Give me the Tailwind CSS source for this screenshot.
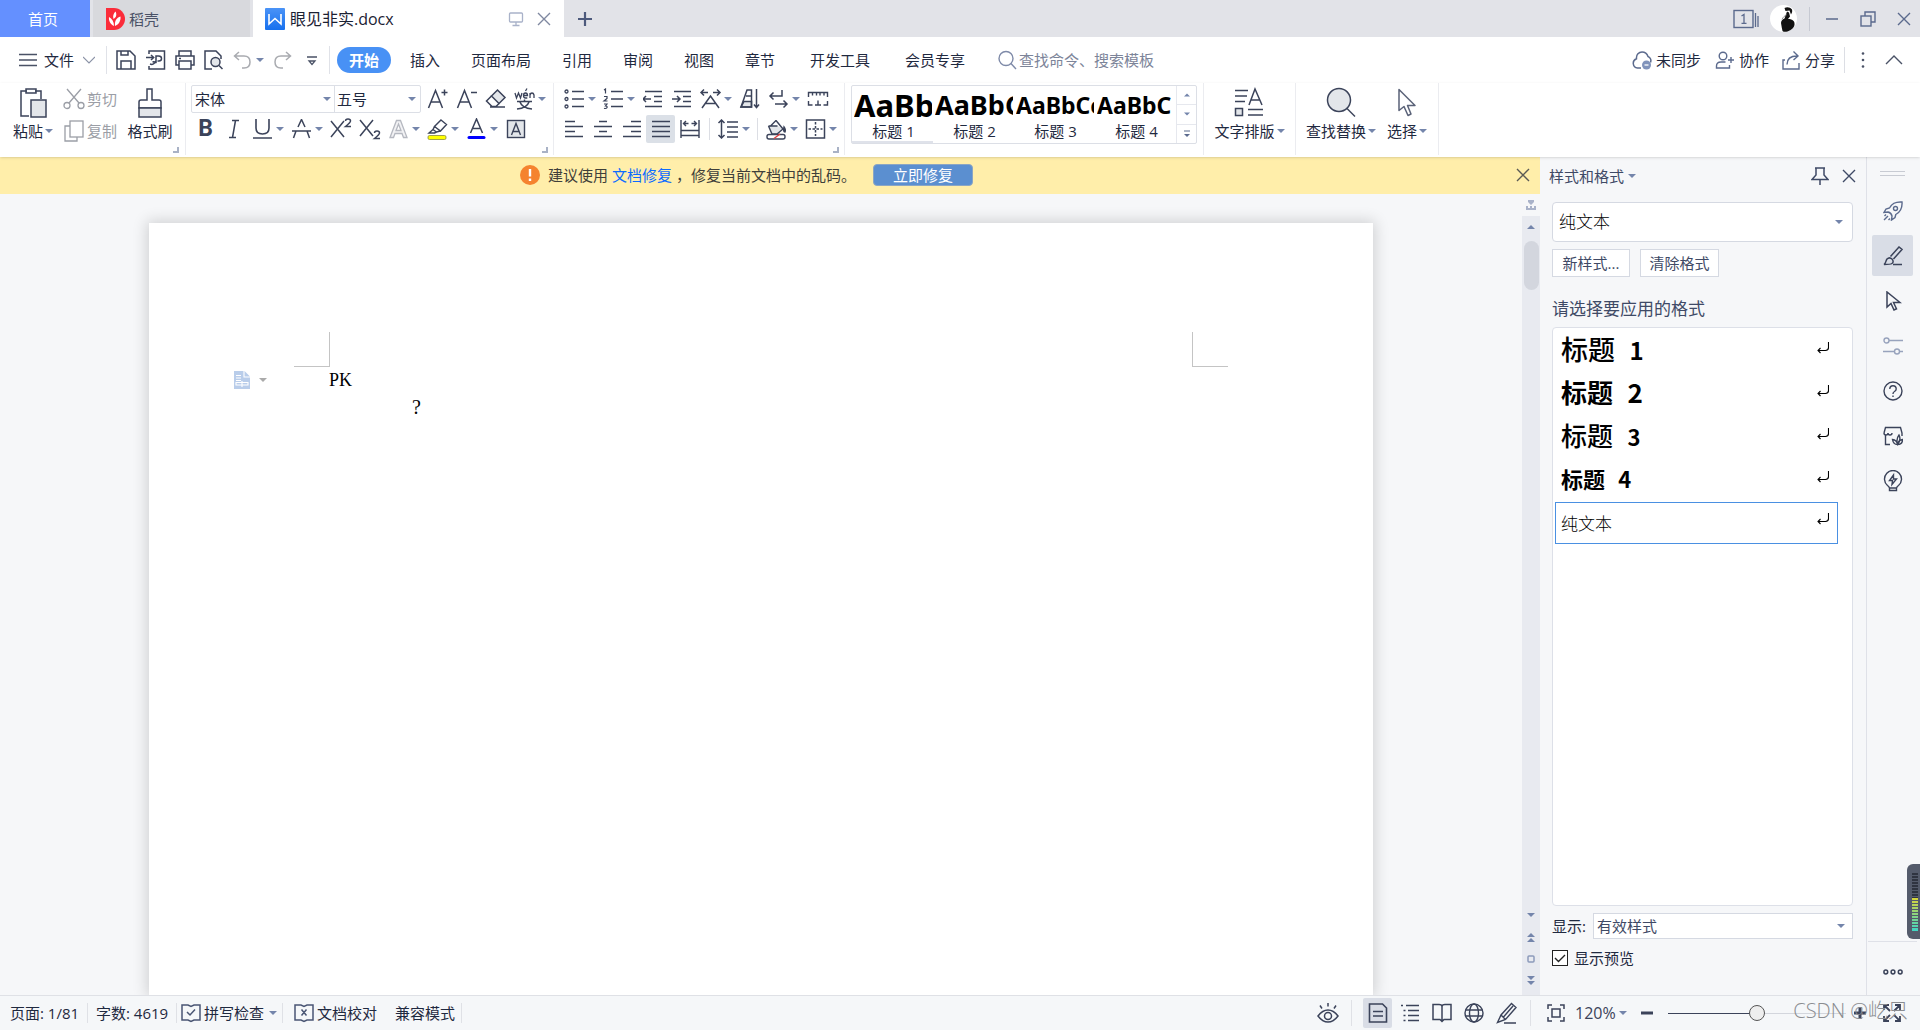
<!DOCTYPE html>
<html lang="zh-CN">
<head>
<meta charset="utf-8">
<title>眼见非实.docx</title>
<script src="https://cdn.jsdelivr.net/npm/@tailwindcss/browser@4"></script>
</head>
<body class="flex h-screen flex-col overflow-hidden bg-[#f6f7f9] font-['Open_Sans','Noto_Sans_CJK_SC',sans-serif] text-[15px] leading-5 text-[#1f2940] whitespace-nowrap">
<svg class="hidden">
  <defs>
    <symbol id="caret" viewBox="0 0 8 8"><path d="M0 2h8L4 6z" fill="#7485ab"/></symbol>
    <symbol id="close" viewBox="0 0 16 16"><path d="M2 2l12 12M14 2L2 14" fill="none" stroke="currentColor" stroke-width="1.4"/></symbol>
    <symbol id="corner" viewBox="0 0 6 6"><path d="M5 0v5H0" fill="none" stroke="#a9b2c6" stroke-width="2"/></symbol>
    <symbol id="cursor" viewBox="0 0 20 30"><path d="M2 2v21l5-4 4 9 3-1.500-3.500-8.500H18z" fill="#fff" stroke="currentColor" stroke-width="1.500" stroke-linejoin="round"/></symbol>
    <symbol id="enter" viewBox="0 0 12 12"><path d="M11.500 0v5.500q0 3-3 3H1M3.500 6L1 8.500 3.500 11" fill="none" stroke="#000" stroke-width="1.100"/></symbol>
  </defs>
</svg>

<!-- Window tabs -->
<header class="flex h-[37px] shrink-0 items-stretch bg-[#e2e3e8]">
  <button class="w-[90px] bg-[#6490ff] pr-1 text-[15px] text-white">首页</button>
  <button class="ml-[3px] flex w-[157px] items-center gap-1 bg-[#d8d9dd] pl-3 text-[15px] text-[#4a5266]">
    <svg class="h-[22px] w-5" viewBox="0 0 20 22"><path d="M1 0h8a11 11 0 0 1 0 22H1z" fill="#fb2c3a"/><path d="M9 18C5 16 3.500 12.500 4 9c3 1.500 5 4.500 5 9zM8.500 11c-1-3 0-5.500 2-7.500 1.500 3 1 6-2 7.500zM10 18c-.5-5 1.500-8.500 5.500-9.500.5 4-1.500 8-5.500 9.500z" fill="#fff"/></svg>
    稻壳
  </button>
  <div class="ml-[3px] flex w-[311px] items-center bg-white pl-3">
    <svg class="h-[22px] w-5" viewBox="0 0 20 22"><defs><linearGradient id="logo" x1="0" y1="0" x2="0" y2="1"><stop offset="0" stop-color="#4a93f7"/><stop offset="1" stop-color="#1670ee"/></linearGradient></defs><rect width="20" height="22" rx="1" fill="url(#logo)"/><path d="M4 6v10l6-5.500 6 5.500V6" fill="none" stroke="#fff" stroke-width="1.600"/></svg>
    <span class="ml-[5px] flex-1 text-[16px] text-[#1b2133]">眼见非实.docx</span>
    <svg class="mr-3 h-4 w-4 text-[#a9b2c9]" viewBox="0 0 16 16" fill="none" stroke="currentColor" stroke-width="1.300"><rect x="1.500" y="2" width="13" height="9" rx="1"/><path d="M8 11v4M4.500 14.500h7"/></svg>
    <button class="mr-3 text-[#7f88a0]" aria-label="关闭标签"><svg class="h-4 w-4"><use href="#close"/></svg></button>
  </div>
  <button class="w-[42px] text-[#4d5a7c]" aria-label="新建"><svg class="mx-auto h-4 w-4" viewBox="0 0 16 16"><path d="M8 1v14M1 8h14" stroke="currentColor" stroke-width="2.200"/></svg></button>
  <div class="flex-1"></div>
  <div class="flex items-center text-[#5b6a8d]">
    <svg class="h-5 w-[26px]" viewBox="0 0 26 20" fill="none" stroke="currentColor" stroke-width="1.400"><rect x="1" y="1.500" width="19" height="17"/><path d="M22.500 4v14M25 7v11M8.500 7l2.500-1.500V14M8.500 14.300h5" stroke-width="1.300"/></svg>
    <svg class="ml-[11px] h-[27px] w-[27px]" viewBox="0 0 27 27"><circle cx="13.500" cy="13.500" r="13.500" fill="#fff"/><path d="M14.500 3c2.500-1.500 5.500-1 7.500 1.500.5 2 0 3.500-1 5l-1.500-4-4 .5zM17 6.500l2 1 1 4-2 2.500c5 0 7 2.500 6.500 6-.5 3-3 5-7 6.500-2 .5-4 .5-5-.5-.5-2-1-5-1.500-8 0-2 1.500-4 3.500-4.500z" fill="#111"/><path d="M12 14.500c1-2.500 3-4 5-5" fill="none" stroke="#777" stroke-width=".8"/></svg>
    <span class="ml-3 h-6 w-px bg-[#c6c9d2]"></span>
    <button class="ml-3 w-5" aria-label="最小化"><svg class="mx-auto h-4 w-4" viewBox="0 0 16 16"><path d="M2 8h12" stroke="currentColor" stroke-width="1.500"/></svg></button>
    <button class="ml-4 w-5" aria-label="还原"><svg class="mx-auto h-4 w-4" viewBox="0 0 16 16" fill="none" stroke="currentColor" stroke-width="1.400"><path d="M5 5V1h10v10h-4"/><rect x="1" y="5" width="10" height="10"/></svg></button>
    <button class="mr-[6px] ml-4 w-5" aria-label="关闭"><svg class="mx-auto h-4 w-4"><use href="#close"/></svg></button>
  </div>
</header>

<!-- Menu row -->
<nav class="flex h-[46px] shrink-0 items-center bg-white">
  <button class="flex w-[106px] items-center pl-[18px]">
    <svg class="h-5 w-5" viewBox="0 0 20 20"><path d="M1 4.500h18M1 10h18M1 15.500h18" stroke="#4a5266" stroke-width="1.300"/></svg>
    <span class="ml-[6px]">文件</span>
    <svg class="ml-[9px] h-3 w-3" viewBox="0 0 12 12"><path d="M0 3l6 6 6-6" fill="none" stroke="#8b93a7" stroke-width="1.200"/></svg>
  </button>
  <div class="flex h-7 w-56 items-center border-x border-[#e0e2e8] pl-[9px] text-[#3b435a]">
    <button aria-label="保存"><svg class="h-5 w-5" viewBox="0 0 20 20" fill="none" stroke="currentColor" stroke-width="1.500"><path d="M1 1h13l5 5v13H1zM5 1v4h7V1M5 19v-8h10v8"/></svg></button>
    <button class="ml-[10px]" aria-label="输出为PDF"><svg class="h-5 w-5" viewBox="0 0 20 20" fill="none" stroke="currentColor" stroke-width="1.500"><path d="M3 4V1h15.500v18H3v-3M0 7.500h7.500M5 5l2.700 2.500L5 10M10 12.500V6h2.500q3 0 3 2.500T13 11h-1.500M4 14q2.500 1 4-.5t2-2.500M6.500 12q2-.5 4 1"/></svg></button>
    <button class="ml-[9px]" aria-label="打印"><svg class="h-5 w-5" viewBox="0 0 20 20" fill="none" stroke="currentColor" stroke-width="1.500"><path d="M4 6V1h12v5M4 15H1V6h18v9h-3"/><rect x="4" y="11" width="12" height="8"/><path d="M4 8.500h2"/></svg></button>
    <button class="ml-[9px]" aria-label="打印预览"><svg class="h-5 w-5" viewBox="0 0 20 20" fill="none" stroke="currentColor" stroke-width="1.500"><path d="M8 19H1V1h11l5 5v3"/><circle cx="11.500" cy="12" r="4.500" fill="#e3e6ea"/><path d="M15 15.500l3.500 3.500"/></svg></button>
    <button class="ml-[9px] flex items-center" aria-label="撤销"><svg class="h-5 w-5 text-[#a9abb0]" viewBox="0 0 20 20" fill="none" stroke="currentColor" stroke-width="1.500"><path d="M6 2L1.500 6 6 10M2 6h9q6 0 6 6t-6 6H9"/></svg><svg class="ml-[3px] h-2 w-2"><use href="#caret"/></svg></button>
    <button class="ml-[8px]" aria-label="恢复"><svg class="h-5 w-5 text-[#a9abb0]" viewBox="0 0 20 20" fill="none" stroke="currentColor" stroke-width="1.500"><path d="M14 2l4.500 4-4.500 4M18 6H9q-6 0-6 6t6 6h2"/></svg></button>
    <button class="ml-[13px]" aria-label="自定义快速访问"><svg class="h-5 w-[14px]" viewBox="0 0 14 20"><path d="M2 7h10M4 11h6l-3 3.500z" fill="none" stroke="#4a5266" stroke-width="1.300"/></svg></button>
  </div>
  <a href="#" class="ml-[7px] flex h-[26px] w-[54px] items-center justify-center rounded-full bg-[#4891f5] font-semibold text-white">开始</a>
  <div class="ml-[19px] flex">
    <a href="#" class="w-[61px]">插入</a><a href="#" class="w-[91px]">页面布局</a><a href="#" class="w-[61px]">引用</a><a href="#" class="w-[61px]">审阅</a><a href="#" class="w-[61px]">视图</a><a href="#" class="w-[65px]">章节</a><a href="#" class="w-[95px]">开发工具</a><a href="#" class="w-[93px]">会员专享</a>
  </div>
  <label class="flex items-center gap-px text-[#7c8499]">
    <svg class="h-5 w-5" viewBox="0 0 20 20" fill="none" stroke="#7e8aa8" stroke-width="1.400"><circle cx="8" cy="8.500" r="7"/><path d="M13 13.500l5 5.500"/></svg>
    <input class="w-40 bg-transparent outline-none placeholder:text-[#7c8499]" placeholder="查找命令、搜索模板" aria-label="查找">
  </label>
  <div class="flex-1"></div>
  <div class="flex items-center text-[#1f2940]">
    <button class="flex items-center gap-1"><svg class="h-5 w-5" viewBox="0 0 20 20"><path d="M9 18H5.500a4.800 4.800 0 0 1-1-9.300C4 4.500 7 2 10 2s5 1.500 6 4.500c2.500 1 3.500 3.500 2.500 6" fill="none" stroke="#5b6a8d" stroke-width="1.500"/><circle cx="14.500" cy="15" r="4.500" fill="#8093bb"/><path d="M12.500 15h4" stroke="#fff" stroke-width="1.300"/></svg>未同步</button>
    <button class="ml-[14px] flex items-center gap-1"><svg class="h-5 w-5" viewBox="0 0 20 20" fill="none" stroke="#5b6a8d" stroke-width="1.400"><circle cx="8" cy="6" r="3.800"/><path d="M10.500 12H6q-4.500 0-4.500 4v2h13v-3M13 10h6M16 7v6"/></svg>协作</button>
    <button class="ml-[12px] flex items-center gap-1"><svg class="h-5 w-5" viewBox="0 0 20 20" fill="none" stroke="#5b6a8d" stroke-width="1.400"><path d="M4 10H2v9h16v-6M6 14.500C6 9 9 6 16 6M12.500 1.500L17 6l-4.500 4"/></svg>分享</button>
    <span class="ml-[9px] h-[26px] w-px bg-[#dcdee4]"></span>
    <button class="ml-2 w-5" aria-label="更多"><svg class="mx-auto h-5 w-5" viewBox="0 0 20 20" fill="#4a5266"><circle cx="10" cy="3.500" r="1.300"/><circle cx="10" cy="10" r="1.300"/><circle cx="10" cy="16.500" r="1.300"/></svg></button>
    <button class="mr-[17px] ml-3" aria-label="收起功能区"><svg class="h-[18px] w-[18px]" viewBox="0 0 18 18"><path d="M1 13l8-8 8 8" fill="none" stroke="#4a5266" stroke-width="1.400"/></svg></button>
  </div>
</nav>

<!-- Ribbon -->
<section class="z-10 flex h-[74px] shrink-0 bg-white pb-[2px] text-[#3b435a] shadow-sm">
  <div class="flex w-[186px] shrink-0 border-r border-[#ebecf0] text-[#1f2940]">
    <button class="flex w-[58px] flex-col items-center pt-1 pl-2">
      <svg class="h-[31px] w-[30px]" viewBox="0 0 30 31" fill="none" stroke="#3b435a" stroke-width="1.500"><path d="M11 29H3V4h6M17 4h6v8"/><path d="M8 2h10v4H8z"/><rect x="13" y="13" width="15" height="17" fill="#e3e6ea"/></svg>
      <span class="mt-[3px] flex items-center">粘贴<svg class="ml-[2px] h-2 w-2"><use href="#caret"/></svg></span>
    </button>
    <div class="flex w-[66px] flex-col pl-[5px] text-[#9b9ea6]">
      <button class="flex h-8 items-center gap-[2px]"><svg class="h-[22px] w-[22px]" viewBox="0 0 22 22" fill="none" stroke="currentColor" stroke-width="1.300"><path d="M4 1l12 14M18 1L6 15"/><circle cx="4" cy="17.500" r="3"/><circle cx="18" cy="17.500" r="3"/></svg>剪切</button>
      <button class="flex h-8 items-center gap-[2px]"><svg class="h-[22px] w-[22px]" viewBox="0 0 22 22" fill="none" stroke="currentColor" stroke-width="1.300"><path d="M7 6H2v15h12v-4"/><rect x="7" y="1" width="13" height="16"/></svg>复制</button>
    </div>
    <button class="flex w-[52px] flex-col items-center pt-1">
      <svg class="h-[31px] w-[26px]" viewBox="0 0 26 31" fill="none" stroke="#3b435a" stroke-width="1.500"><path d="M10 13V2h5v11h7q2 0 2 2v6H2v-6q0-2 2-2z"/><path d="M2 21h22v9H2z" fill="#e3e6ea"/></svg>
      <span class="mt-[3px]">格式刷</span>
    </button>
    <svg class="mb-[2px] -ml-[3px] h-[6px] w-[6px] self-end"><use href="#corner"/></svg>
  </div>

  <div class="w-[368px] shrink-0 border-r border-[#ebecf0] pl-[5px]">
    <div class="flex h-8 items-center">
      <div class="mr-[2px] flex h-7 w-[230px] rounded-xs border border-[#dcdfe6] text-[#1f2940]">
        <label class="flex w-[143px] items-center border-r border-[#dcdfe6] pr-[3px]"><select aria-label="字体" class="flex-1 appearance-none bg-transparent pl-[3px] text-[15px]"><option>宋体</option></select><svg class="h-2 w-2"><use href="#caret"/></svg></label>
        <label class="flex flex-1 items-center pr-1"><select aria-label="字号" class="w-10 flex-1 appearance-none bg-transparent pl-[2px] text-[15px]"><option>五号</option></select><svg class="h-2 w-2"><use href="#caret"/></svg></label>
      </div>
      <button class="w-[29px]" aria-label="增大字号"><svg class="mx-auto h-[22px] w-[22px]" viewBox="0 0 22 22" fill="none" stroke="currentColor" stroke-width="1.500"><path d="M1.500 20L8.500 2.500l7 17.500M4 14h9M14.500 4.500h6M17.500 1.500v6"/></svg></button>
      <button class="w-[29px]" aria-label="减小字号"><svg class="mx-auto h-[22px] w-[22px]" viewBox="0 0 22 22" fill="none" stroke="currentColor" stroke-width="1.500"><path d="M1.500 20L8.500 2.500l7 17.500M4 14h9M15 4.500h6"/></svg></button>
      <button class="w-[29px]" aria-label="清除格式"><svg class="mx-auto h-[22px] w-[22px]" viewBox="0 0 22 22" fill="none" stroke="currentColor" stroke-width="1.500"><path d="M12.500 2l7.500 7.500-6 6L6.500 8z" fill="#e3e6ea"/><path d="M6.500 8L1.500 13l5.500 5.500h4l3-3M5 19h15"/></svg></button>
      <button class="flex w-[39px] items-center" aria-label="拼音指南"><svg class="h-[24px] w-[29px]" viewBox="0 0 29 24" fill="none" stroke="currentColor" stroke-width="1.500"><path d="M5 6l1.500 5L8.500 6l2 5L12 6M13.500 8.500h4q0-2.500-2-2.500t-2 2.500T15.500 11h1.800M15.500 4l1.500-2.500M20 11V6M20 8q.5-2 2-2t2 2v3" stroke-width="1.300"/><path d="M7 14.500h15M14.500 12.500v2M10 15q2 6 12 7M19 15q-2 6-12 7"/></svg><svg class="-ml-px h-2 w-2"><use href="#caret"/></svg></button>
    </div>
    <div class="flex h-7 items-center">
      <button class="w-[29px] font-['Roboto'] text-[23px] font-bold" aria-label="加粗">B</button>
      <button class="w-[28px]" aria-label="倾斜"><svg class="mx-auto h-5 w-5" viewBox="0 0 20 20" fill="none" stroke="currentColor" stroke-width="1.500"><path d="M8 1.500h7M5 18.500h7M11.500 1.500l-3 17"/></svg></button>
      <button class="flex w-[39px] items-center" aria-label="下划线"><svg class="h-5 w-[29px]" viewBox="0 0 29 20" fill="none" stroke="currentColor" stroke-width="1.600"><path d="M8 0v9q0 6 6.500 6t6.500-6V0M5 19h19"/></svg><svg class="-ml-px h-2 w-2"><use href="#caret"/></svg></button>
      <button class="flex w-[39px] items-center" aria-label="删除线"><svg class="h-5 w-[29px]" viewBox="0 0 29 20" fill="none" stroke="currentColor" stroke-width="1.500"><path d="M11 8l3.500-7.500L18 8M5 12h19M9 12l-2.500 7M20 12l2.500 7"/></svg><svg class="-ml-px h-2 w-2"><use href="#caret"/></svg></button>
      <button class="w-[29px]" aria-label="上标"><svg class="mx-auto h-[22px] w-[22px]" viewBox="0 0 22 22" fill="none" stroke="currentColor" stroke-width="1.500"><path d="M1 3l13 16M14 3L1 19M15.500 3q0-2 2.500-2t2.500 2q0 1.500-5 5.500H21"/></svg></button>
      <button class="w-[29px]" aria-label="下标"><svg class="mx-auto h-[22px] w-[22px]" viewBox="0 0 22 22" fill="none" stroke="currentColor" stroke-width="1.500"><path d="M1 2l13 16M14 2L1 18M15.500 15q0-2 2.500-2t2.500 2q0 1.500-5 5.500H21"/></svg></button>
      <button class="flex w-[39px] items-center" aria-label="文字效果"><svg class="h-5 w-[29px]" viewBox="0 0 29 20" fill="#f2f2f4" stroke="#b5b8c0" stroke-width="1.300"><path d="M6 18.500L12.500 1.500h4l6.500 17h-3.500l-1.500-4h-7l-1.500 4zM12 11.500h5L14.500 5z"/></svg><svg class="-ml-px h-2 w-2"><use href="#caret"/></svg></button>
      <button class="flex w-[39px] items-center" aria-label="突出显示"><svg class="h-[22px] w-[29px]" viewBox="0 0 29 22" fill="none" stroke="currentColor" stroke-width="1.400"><path d="M18 2l5.500 4.500-6 6.500-6-4.500zM11.500 8.500l-1.500 3 3.500 2.500 4-1M10 11.500l-4 3.500h5.500l2-1"/><rect x="5" y="17.500" width="18" height="4" rx="1.500" fill="#ff0" stroke="#8a8a40" stroke-width=".8"/></svg><svg class="-ml-px h-2 w-2"><use href="#caret"/></svg></button>
      <button class="flex w-[39px] items-center" aria-label="字体颜色"><svg class="h-[22px] w-[29px]" viewBox="0 0 29 22" fill="none" stroke="currentColor" stroke-width="1.500"><path d="M8.500 15L14.500 1l6 14M10.500 10.500h8"/><path d="M7 19.500h15" stroke="#00f" stroke-width="3" stroke-linecap="round"/></svg><svg class="-ml-px h-2 w-2"><use href="#caret"/></svg></button>
      <button class="w-[29px]" aria-label="字符底纹"><svg class="mx-auto h-5 w-5" viewBox="0 0 20 20" fill="none" stroke="currentColor" stroke-width="1.400"><rect x="1.500" y="1.500" width="17" height="17" fill="#e3e6ea"/><path d="M5.500 16L10 4.500 14.500 16M7 12.500h6"/></svg></button>
    </div>
    <svg class="mt-1 mr-[5px] ml-auto h-[6px] w-[6px]"><use href="#corner"/></svg>
  </div>

  <div class="w-[291px] shrink-0 border-r border-[#ebecf0] pl-[6px]">
    <div class="flex h-8 items-center">
      <button class="flex w-[39px] items-center" aria-label="项目符号"><svg class="h-5 w-[29px]" viewBox="0 0 29 20" fill="none" stroke="currentColor" stroke-width="1.500"><path d="M12 2.500h12M12 10h12M12 17.500h12"/><g stroke-width="1.300"><circle cx="6.500" cy="2.500" r="1.500"/><circle cx="6.500" cy="10" r="1.500"/><circle cx="6.500" cy="17.500" r="1.500"/></g></svg><svg class="-ml-px h-2 w-2"><use href="#caret"/></svg></button>
      <button class="flex w-[39px] items-center" aria-label="编号"><svg class="h-[22px] w-[29px]" viewBox="0 0 29 22" fill="none" stroke="currentColor" stroke-width="1.500"><path d="M12 3.500h12M12 11h12M12 18.500h12"/><path d="M5 2l1.500-1v4.500M5 8.500h3v2L5 13h3.500M5 16h3l-1.500 2q2 0 1.500 1.700-1 1.300-3 .5" stroke-width="1.200"/></svg><svg class="-ml-px h-2 w-2"><use href="#caret"/></svg></button>
      <button class="w-[29px]" aria-label="减少缩进"><svg class="mx-auto h-5 w-5" viewBox="0 0 20 20" fill="none" stroke="currentColor" stroke-width="1.500"><path d="M2 2.500h17M11 7.500h8M11 12.500h8M2 17.500h17M0 10h8M3 7l-3 3 3 3"/></svg></button>
      <button class="w-[29px]" aria-label="增加缩进"><svg class="mx-auto h-5 w-5" viewBox="0 0 20 20" fill="none" stroke="currentColor" stroke-width="1.500"><path d="M2 2.500h17M11 7.500h8M11 12.500h8M2 17.500h17M0 10h8M5 7l3 3-3 3"/></svg></button>
      <button class="flex w-[39px] items-center" aria-label="中文版式"><svg class="h-[22px] w-[29px]" viewBox="0 0 29 22" fill="none" stroke="currentColor" stroke-width="1.500"><path d="M6 20l8.500-12L23 20M9.500 15.500h10M5 4.500h7M8 1.500l-3 3 3 3M17 4.500h7M21 1.500l3 3-3 3"/></svg><svg class="-ml-px h-2 w-2"><use href="#caret"/></svg></button>
      <button class="w-[29px]" aria-label="排序"><svg class="mx-auto h-[22px] w-[22px]" viewBox="0 0 22 22" fill="none" stroke="currentColor" stroke-width="1.500"><path d="M5 13.500h7.500V19H2z" fill="#e3e6ea"/><path d="M8 2h4.500v17H2zM7 8h5M17.500 1v18M15 16.500l2.500 3 2.500-3"/></svg></button>
      <button class="flex w-[39px] items-center" aria-label="换行"><svg class="h-[22px] w-[29px]" viewBox="0 0 29 22" fill="none" stroke="currentColor" stroke-width="1.500"><path d="M18 2v6H6M9.500 4.500L6 8l3.500 3.500M11 16h12M19.500 12.500L23 16l-3.500 3.500"/></svg><svg class="-ml-px h-2 w-2"><use href="#caret"/></svg></button>
      <button class="w-[29px]" aria-label="制表位"><svg class="mx-auto h-[22px] w-[22px]" viewBox="0 0 22 22" fill="none" stroke="currentColor" stroke-width="1.400"><path d="M1.500 9V4.500h19V9M5.500 4.500v3M9.500 4.500v3M13 4.500v3M17 4.500v3M1.500 13v4h4M20.500 13v4h-4M11 12.500V17M8 17h6"/></svg></button>
    </div>
    <div class="flex h-7 items-center">
      <button class="w-[28px]" aria-label="左对齐"><svg class="mx-auto h-5 w-5" viewBox="0 0 20 20" stroke="currentColor" stroke-width="1.500"><path d="M1 2.500h10M1 7.500h18M1 12.500h10M1 17.500h18"/></svg></button>
      <button class="w-[29px]" aria-label="居中"><svg class="mx-auto h-5 w-5" viewBox="0 0 20 20" stroke="currentColor" stroke-width="1.500"><path d="M6 2.500h8M1 7.500h18M6 12.500h8M1 17.500h18"/></svg></button>
      <button class="w-[29px]" aria-label="右对齐"><svg class="mx-auto h-5 w-5" viewBox="0 0 20 20" stroke="currentColor" stroke-width="1.500"><path d="M9 2.500h10M1 7.500h18M9 12.500h10M1 17.500h18"/></svg></button>
      <button class="h-7 w-[29px] rounded-xs bg-[#dbe0e7]" aria-label="两端对齐"><svg class="mx-auto h-5 w-5" viewBox="0 0 20 20" stroke="currentColor" stroke-width="1.500"><path d="M1 2.500h18M1 7.500h18M1 12.500h18M1 17.500h18"/></svg></button>
      <button class="w-[29px]" aria-label="分散对齐"><svg class="mx-auto h-5 w-5" viewBox="0 0 20 20" fill="none" stroke="currentColor" stroke-width="1.400"><path d="M1 1v18M19 1v18M3.500 4.500h5M11.500 4.500h5M6 2L3.500 4.500 6 7M14 2l2.500 2.500L14 7M1 11.500h18M1 16.500h18"/></svg></button>
      <span class="ml-[5px] mr-1 h-[22px] w-px bg-[#dcdee4]"></span>
      <button class="flex w-[39px] items-center" aria-label="行距"><svg class="h-5 w-[29px]" viewBox="0 0 29 20" fill="none" stroke="currentColor" stroke-width="1.500"><path d="M13 3h11M13 8h11M13 13h11M13 18h11M7.500 1v18M4.500 4l3-3 3 3M4.500 16l3 3 3-3"/></svg><svg class="-ml-px h-2 w-2"><use href="#caret"/></svg></button>
      <span class="mx-1 h-[22px] w-px bg-[#dcdee4]"></span>
      <button class="flex w-[39px] items-center" aria-label="底纹颜色"><svg class="h-[22px] w-[29px]" viewBox="0 0 29 22" fill="none" stroke="currentColor" stroke-width="1.400"><path d="M7 8h9l5 3-6 5H10z" fill="#e3e6ea" stroke="none"/><path d="M14 2.500L21 11l-6 5h-5L6.500 8M6.500 8h9M14 2.500L8 8.500"/><path d="M22 9q2 3 1 5-2 0-1-5z" fill="currentColor"/><rect x="5" y="16.500" width="18" height="4.500" rx="2" fill="#fff"/><path d="M12 20.500l6-4.500" stroke="#e04040"/></svg><svg class="-ml-px h-2 w-2"><use href="#caret"/></svg></button>
      <button class="flex w-[39px] items-center" aria-label="边框"><svg class="h-5 w-[29px]" viewBox="0 0 29 20" fill="none" stroke="currentColor" stroke-width="1.500"><rect x="5.500" y="1" width="18" height="18"/><path d="M14.500 3v14M7.500 10h14" stroke-dasharray="2.500 1.500"/></svg><svg class="-ml-px h-2 w-2"><use href="#caret"/></svg></button>
    </div>
    <svg class="mt-1 mr-[5px] ml-auto h-[6px] w-[6px]"><use href="#corner"/></svg>
  </div>

  <div class="w-[359px] shrink-0 border-r border-[#ebecf0] pt-[2px] pl-[6px] text-[#1f2940]">
    <div class="flex h-[59px] w-[346px] rounded-xs border border-[#dcdfe6]">
      <button class="flex w-[81px] flex-col items-start border-b-2 border-[#dfe2ea] pl-[2px]"><b class="h-[35px] w-[78px] overflow-hidden text-left font-['Noto_Sans'] text-[31px] leading-[38px] text-black">AaBb</b><span class="w-full text-center">标题 1</span></button>
      <button class="flex w-[81px] flex-col items-start pl-[2px]"><b class="h-[35px] w-[78px] overflow-hidden text-left font-['Noto_Sans'] text-[27px] leading-[38px] text-black">AaBbC</b><span class="w-full text-center">标题 2</span></button>
      <button class="flex w-[81px] flex-col items-start pl-[2px]"><b class="h-[35px] w-[78px] overflow-hidden text-left font-['Noto_Sans'] text-[23px] leading-[38px] text-black">AaBbCc</b><span class="w-full text-center">标题 3</span></button>
      <button class="flex w-[81px] flex-col items-start pl-[2px]"><b class="h-[35px] w-[78px] overflow-hidden text-left font-['Noto_Sans'] text-[23px] leading-[38px] text-black">AaBbC</b><span class="w-full text-center">标题 4</span></button>
      <div class="flex flex-1 flex-col divide-y divide-[#e6e8ee] border-l border-[#e6e8ee]">
        <button class="flex-1" aria-label="上一行"><svg class="mx-auto h-[6px] w-[6px] rotate-180"><use href="#caret"/></svg></button>
        <button class="flex-1" aria-label="下一行"><svg class="mx-auto h-[6px] w-[6px]"><use href="#caret"/></svg></button>
        <button class="flex-1" aria-label="更多样式"><svg class="mx-auto h-2 w-2" viewBox="0 0 8 8"><path d="M1 1h6" stroke="#5b6a8d"/><path d="M1 4h6L4 7z" fill="#5b6a8d"/></svg></button>
      </div>
    </div>
  </div>

  <div class="flex w-[92px] shrink-0 justify-center border-r border-[#ebecf0] text-[#1f2940]">
    <button class="flex flex-col items-center pt-1">
      <svg class="h-[31px] w-[30px]" viewBox="0 0 30 31" fill="none" stroke="#3b435a" stroke-width="1.500"><path d="M1 3.500h13M1 9h12M1 14.500h10M15 18l6-16 7 16M17 13h9M14 22.500h15M14 28h15"/><rect x="1.500" y="21.500" width="7" height="7" fill="#e3e6ea"/></svg>
      <span class="mt-[3px] flex items-center">文字排版<svg class="ml-[2px] h-2 w-2"><use href="#caret"/></svg></span>
    </button>
  </div>
  <div class="flex w-[143px] shrink-0 border-r border-[#ebecf0] pl-[10px] text-[#1f2940]">
    <button class="flex flex-col items-center pt-1">
      <svg class="h-[31px] w-[30px]" viewBox="0 0 30 31" fill="none" stroke="#3b435a" stroke-width="1.500"><circle cx="13" cy="13" r="11.500" fill="#e3e6ea"/><path d="M21 21.500l8 8"/></svg>
      <span class="mt-[3px] flex items-center">查找替换<svg class="ml-[2px] h-2 w-2"><use href="#caret"/></svg></span>
    </button>
    <button class="ml-[11px] flex flex-col items-center pt-1">
      <svg class="h-[31px] w-5 text-[#5a6278]"><use href="#cursor"/></svg>
      <span class="mt-[3px] flex items-center">选择<svg class="ml-[2px] h-2 w-2"><use href="#caret"/></svg></span>
    </button>
  </div>
</section>

<!-- Work area -->
<main class="flex min-h-0 flex-1">
  <div class="flex min-w-0 flex-1 flex-col">
    <div class="flex h-[37px] shrink-0 items-center bg-[#ffeeaa] pb-[2px] text-[#3f3f3a]">
      <div class="flex flex-1 items-center pl-[520px]">
        <svg class="h-5 w-5" viewBox="0 0 20 20"><circle cx="10" cy="10" r="10" fill="#f5832f"/><path d="M10 4v7.500M10 13.500V16" stroke="#fff" stroke-width="2.400"/></svg>
        <span class="ml-2">建议使用</span><a href="#" class="ml-1 text-[#0d6bff]">文档修复</a><span class="ml-1">，修复当前文档中的乱码。</span>
        <button class="ml-[17px] h-[22px] w-[100px] rounded-sm border border-[#8ba6c4] bg-[#5b8fd0] leading-[18px] text-white">立即修复</button>
      </div>
      <button class="mr-[9px] text-[#5a5a55]" aria-label="关闭提示"><svg class="h-4 w-4"><use href="#close"/></svg></button>
    </div>
    <div class="flex min-h-0 flex-1">
      <div class="min-w-0 flex-1 overflow-hidden pt-[29px] pr-[149px] pl-[149px]">
        <article class="h-full bg-white pt-[109px] shadow-[0_0_14px_2px_rgba(0,0,0,0.16)]">
          <div class="mx-[145px] flex justify-between">
            <span class="h-[35px] w-9 border-r border-b border-[#c4c4c4]"></span>
            <span class="h-[35px] w-9 border-b border-l border-[#c4c4c4]"></span>
          </div>
          <div class="flex items-center pl-[85px]">
            <button class="flex w-[95px] items-center" aria-label="粘贴选项"><svg class="h-[18px] w-4" viewBox="0 0 16 18"><path d="M0 0h10.500L16 5.500V18H0z" fill="#b9cdea"/><path d="M10 0v6h6M2 4.500h5M2 7h5M2 9.500h5M2 14v-2.500h12V14zM8 10v6" fill="none" stroke="#fff" stroke-width="1.100"/></svg><svg class="ml-[9px] h-2 w-2" viewBox="0 0 8 8"><path d="M0 2h8L4 6z" fill="#aaa"/></svg></button>
            <p class="h-[26px] font-['Liberation_Serif',serif] text-[18px] leading-[26px] text-black">PK</p>
          </div>
          <p class="pl-[263px] font-['Liberation_Serif',serif] text-[20px] leading-7 text-black">?</p>
        </article>
      </div>
      <div class="flex w-[18px] shrink-0 flex-col items-center bg-[#e8eaf0]">
        <span class="flex h-[22px] w-full items-center justify-center bg-[#f6f7f9]"><svg class="h-3 w-[10px]" viewBox="0 0 10 12" fill="#a9b2c9"><path d="M2 1h6v2L5 6 2 3zM0 7h2v2h2V7h2v2h2V7h2v4H0z"/></svg></span>
        <svg class="mt-[7px] h-2 w-2 rotate-180"><use href="#caret"/></svg>
        <span class="mt-[10px] h-[49px] w-[15px] rounded-full bg-[#d3d6de]"></span>
        <span class="flex-1"></span>
        <svg class="h-2 w-2"><use href="#caret"/></svg>
        <svg class="mt-[13px] h-[10px] w-2" viewBox="0 0 8 10" fill="#7485ab"><path d="M0 5l4-4 4 4zM0 10l4-4 4 4z"/></svg>
        <svg class="mt-[13px] h-2 w-2" viewBox="0 0 8 8"><rect x="1" y="1" width="6" height="6" rx="1" fill="none" stroke="#8c9aba" stroke-width="1.500"/></svg>
        <svg class="mt-[13px] mb-[9px] h-[10px] w-2" viewBox="0 0 8 10" fill="#7485ab"><path d="M0 0l4 4 4-4zM0 5l4 4 4-4z"/></svg>
      </div>
    </div>
  </div>

  <!-- Styles pane -->
  <aside class="flex w-[326px] shrink-0 flex-col pr-[13px] pl-3 text-[#3f4a66]">
    <div class="flex h-[38px] shrink-0 items-center">
      <button class="-ml-[3px] flex items-center">样式和格式<svg class="ml-1 h-2 w-2"><use href="#caret"/></svg></button>
      <span class="flex-1"></span>
      <button aria-label="固定"><svg class="h-[18px] w-[18px]" viewBox="0 0 18 18" fill="none" stroke="currentColor" stroke-width="1.500"><path d="M4 1h10M5 1v7l-4 4.500h16L13 8V1M9 12.500V18"/></svg></button>
      <button class="ml-3 -mr-1" aria-label="关闭窗格"><svg class="h-4 w-4"><use href="#close"/></svg></button>
    </div>
    <label class="mt-[7px] flex h-10 shrink-0 items-center rounded-sm border border-[#d5d9e2] bg-white pr-[9px]"><select aria-label="当前样式" class="flex-1 appearance-none bg-transparent pl-[6px] text-[17px] font-light text-black"><option>纯文本</option></select><svg class="h-2 w-2"><use href="#caret"/></svg></label>
    <div class="mt-[7px] flex shrink-0 gap-[10px]">
      <button class="h-7 w-[78px] border border-[#d5d9e2] bg-white">新样式...</button>
      <button class="h-7 w-[79px] border border-[#d5d9e2] bg-white">清除格式</button>
    </div>
    <h2 class="mt-5 shrink-0 text-[17px] leading-6">请选择要应用的格式</h2>
    <ul class="mt-[6px] min-h-0 flex-1 rounded-sm border border-[#dde0e8] bg-white pt-[2px] pl-[2px] font-['Noto_Sans_CJK_SC',sans-serif] text-black">
      <li class="flex h-[43px] w-[283px] items-center justify-between px-[6px] pr-[9px]"><span class="text-[27px] leading-10 font-medium">标题<span class="font-['Liberation_Mono'] text-[24px]"> </span><b class="text-[24px]">1</b></span><svg class="mb-2 h-3 w-3"><use href="#enter"/></svg></li>
      <li class="flex h-[43px] w-[283px] items-center justify-between px-[6px] pr-[9px]"><span class="text-[26px] leading-10 font-bold">标题<span class="font-['Liberation_Mono'] text-[24px]"> </span>2</span><svg class="mb-2 h-3 w-3"><use href="#enter"/></svg></li>
      <li class="flex h-[43px] w-[283px] items-center justify-between px-[6px] pr-[9px]"><span class="text-[26px] leading-10 font-medium">标题<span class="font-['Liberation_Mono'] text-[24px]"> </span><b class="text-[22px]">3</b></span><svg class="mb-2 h-3 w-3"><use href="#enter"/></svg></li>
      <li class="flex h-[43px] w-[283px] items-center justify-between px-[6px] pr-[9px]"><span class="text-[22px] leading-10 font-bold">标题<span class="font-['Liberation_Mono']"> </span>4</span><svg class="mb-2 h-3 w-3"><use href="#enter"/></svg></li>
      <li class="flex h-[42px] w-[283px] items-center justify-between border border-[#4a90e2] pr-2 pl-[5px]"><span class="text-[17px] font-light">纯文本</span><svg class="mb-2 h-3 w-3"><use href="#enter"/></svg></li>
    </ul>
    <div class="mt-[7px] flex h-[26px] shrink-0 items-center text-[#1f2940]">
      <label for="show">显示:</label>
      <span class="ml-[7px] flex h-[26px] flex-1 items-center border border-[#d5d9e2] bg-white pr-[7px]"><select id="show" class="flex-1 appearance-none bg-transparent pl-[3px] text-[15px] text-[#3f4a66]"><option>有效样式</option></select><svg class="h-2 w-2"><use href="#caret"/></svg></span>
    </div>
    <label class="mt-[11px] mb-[29px] flex h-4 shrink-0 items-center gap-[6px] text-[#1f2940]"><span class="grid"><input type="checkbox" checked class="col-start-1 row-start-1 h-4 w-4 appearance-none border border-[#222] bg-white"><svg class="pointer-events-none col-start-1 row-start-1 h-4 w-4" viewBox="0 0 16 16"><path d="M3 8l3.500 3.500L13 5" fill="none" stroke="#222" stroke-width="1.400"/></svg></span>显示预览</label>
  </aside>

  <!-- Tool strip -->
  <aside class="relative flex w-[54px] shrink-0 flex-col items-center border-l border-[#dfe1e8] pr-[2px] text-[#3b435a]">
    <span class="mt-[14px] mb-[14px] h-[5px] w-[25px] shrink-0 border-y border-[#c8cbd3]"></span>
    <button class="mb-1 grid h-[41px] w-[41px] shrink-0 place-items-center" aria-label="快捷"><svg class="h-5 w-5" viewBox="0 0 20 20" fill="none" stroke="#5b6a8d" stroke-width="1.400"><path d="M19 1c-7-.5-10 1.500-12.500 6L3 8l-2 3.500 4-.5c2 .5 3.500 2 4 4l-.5 4 3.500-2.500.8-3C17.500 11 19.500 7.500 19 1zM1 19l4-4M1.500 15L3 13.500M5.500 19L7 17.500"/><circle cx="12.500" cy="7.500" r="2"/></svg></button>
    <button class="mb-1 grid h-[41px] w-[41px] shrink-0 place-items-center rounded-xs bg-[#d9dde6]" aria-label="样式"><svg class="h-5 w-5" viewBox="0 0 20 20" fill="none" stroke="currentColor" stroke-width="1.500"><path d="M7.500 10.500L16 1l3 2.500L10.500 13M1 18.500c2-1 1.500-3.500 3-5.500 1.500-1.500 3.500-1.500 5 0s1.500 3.500 0 4.500-5 1-8 1zM10 18.500h9"/></svg></button>
    <button class="mb-1 grid h-[41px] w-[41px] shrink-0 place-items-center" aria-label="选择"><svg class="h-5 w-[18px]" viewBox="0 0 18 20" fill="none" stroke="currentColor" stroke-width="1.500"><path d="M3 1v15l4-3.500 3 6.500 2.500-1.200-3-6.300H16z"/></svg></button>
    <button class="mb-1 grid h-[41px] w-[41px] shrink-0 place-items-center" aria-label="属性"><svg class="h-5 w-5" viewBox="0 0 20 20" fill="none" stroke="#98a3bd" stroke-width="1.400"><circle cx="3.500" cy="4.500" r="2.500"/><circle cx="14" cy="15.500" r="2.500"/><path d="M6 4.500h14M0 15.500h11.500M16.500 15.500H20"/></svg></button>
    <button class="mb-1 grid h-[41px] w-[41px] shrink-0 place-items-center" aria-label="帮助"><svg class="h-5 w-5" viewBox="0 0 20 20" fill="none" stroke="currentColor" stroke-width="1.400"><circle cx="10" cy="10" r="9"/><path d="M6.800 8q0-3.300 3.200-3.300T13.200 8q0 1.500-1.700 2.500T10 13M10 14.500v1.500"/></svg></button>
    <button class="mb-1 grid h-[41px] w-[41px] shrink-0 place-items-center" aria-label="资源"><svg class="h-5 w-5" viewBox="0 0 20 20" fill="none" stroke="currentColor" stroke-width="1.400"><path d="M2.500 9v9.500H7M1 7l1.500-5.500h15L19 7v3M1 7q0 2 2 2t2-2q0 2 2 2t2-2"/><path d="M14.500 18.500c-3 0-4.500-2-5-5 3 .3 4.500 2 5 5zM14.500 18.500c-1.200-4-.5-7 1.500-9.500 1.500 3 1 6.500-1.500 9.500zM14.500 18.500c.5-3 2-4.500 5-5 0 3-2 5-5 5z"/></svg></button>
    <button class="grid h-[41px] w-[41px] shrink-0 place-items-center" aria-label="灵感"><svg class="h-[22px] w-5" viewBox="0 0 20 22" fill="none" stroke="currentColor" stroke-width="1.400"><path d="M6.500 18q-.5-1.500-2-2.500a8.500 8.500 0 1 1 11 0q-1.500 1-2 2.500v2.500h-7zM6.500 18h7M10.500 5l-4 5.500h3L9 14.500l4.500-5.500h-3z"/></svg></button>
    <span class="flex-1"></span>
    <span class="mb-[26px] h-px w-[49px] shrink-0 bg-[#dfe1e8]"></span>
    <button class="mb-[19px]" aria-label="更多工具"><svg class="h-2 w-5" viewBox="0 0 20 8" fill="none" stroke="currentColor" stroke-width="1.500"><circle cx="2.800" cy="4" r="1.900"/><circle cx="10" cy="4" r="1.900"/><circle cx="17.200" cy="4" r="1.900"/></svg></button>
    <div class="absolute right-0 bottom-14 flex h-[75px] w-[13px] flex-col rounded-l-md bg-[#545b6b] pt-[9px] pr-[2px] pb-2 pl-[5px]">
      <span class="flex-1 bg-[repeating-linear-gradient(#2f3440_0_2px,#545b6b_2px_3px)]"></span>
      <svg class="h-[33px] w-[6px]" viewBox="0 0 6 33"><defs><linearGradient id="level" x1="0" y1="0" x2="0" y2="1"><stop offset="0" stop-color="#d8d63a"/><stop offset="1" stop-color="#3fd6c4"/></linearGradient></defs><rect width="6" height="33" fill="url(#level)"/><path d="M0 2.500h6M0 5.500h6M0 8.500h6M0 11.500h6M0 14.500h6M0 17.500h6M0 20.500h6M0 23.500h6M0 26.500h6M0 29.500h6" stroke="#545b6b"/></svg>
    </div>
  </aside>
</main>

<!-- Status bar -->
<footer class="relative flex h-[35px] shrink-0 items-center border-t border-[#dfe1e6] bg-[#f5f7f9]">
  <span class="w-[77px] pl-[10px]">页面: 1/81</span>
  <span class="ml-[10px] w-[89px] border-l border-[#dfe1e6] pl-2">字数: 4619</span>
  <button class="flex w-[106px] items-center border-l border-[#dfe1e6] pl-1"><svg class="h-5 w-5" viewBox="0 0 20 20" fill="none" stroke="#4a5674" stroke-width="1.500"><path d="M1 2h6l3 1.500L13 2h6v15h-6l-3 1.500L7 17H1zM6 9l3 3 5-5.500"/></svg><span class="ml-[3px]">拼写检查</span><svg class="ml-[5px] h-2 w-2"><use href="#caret"/></svg></button>
  <button class="flex w-[113px] items-center border-l border-[#dfe1e6] pl-[11px]"><svg class="h-5 w-5" viewBox="0 0 20 20" fill="none" stroke="#4a5674" stroke-width="1.500"><path d="M1 2h6l3 1.500L13 2h6v15h-6l-3 1.500L7 17H1zM7.500 6.500l5 6M12.500 6.500l-5 6"/></svg><span class="ml-[3px]">文档校对</span></button>
  <span class="w-[67px] border-r border-[#dfe1e6]">兼容模式</span>
  <span class="flex-1"></span>
  <div class="flex items-center text-[#3b435a]">
    <button class="mr-[12px]" aria-label="护眼模式"><svg class="h-[22px] w-[22px]" viewBox="0 0 22 22" fill="none" stroke="currentColor" stroke-width="1.500"><path d="M1 14q4.500-6 10-6t10 6q-4.500 6-10 6T1 14zM11 1v3.500M3 3.500l2 3M19 3.500l-2 3"/><circle cx="11" cy="14" r="3.500"/></svg></button>
    <span class="h-[26px] w-px bg-[#dfe1e6]"></span>
    <button class="ml-[11px] grid h-[30px] w-[29px] place-items-center rounded-xs bg-[#d9dde6]" aria-label="页面视图"><svg class="h-5 w-5" viewBox="0 0 20 20" fill="none" stroke="currentColor" stroke-width="1.600"><path d="M1.500 1h13l4 4v14h-17zM5 8.500h10M5 13h10"/></svg></button>
    <button class="ml-2" aria-label="大纲视图"><svg class="h-5 w-5" viewBox="0 0 20 20" stroke="currentColor" stroke-width="1.500"><path d="M1 2.500h2M6 2.500h13M3.500 7.500h2M8 7.500h11M3.500 12.500h2M8 12.500h11M3.500 17.500h2M8 17.500h11"/></svg></button>
    <button class="ml-3" aria-label="阅读版式"><svg class="h-5 w-5" viewBox="0 0 20 20" fill="none" stroke="currentColor" stroke-width="1.500"><path d="M1 1.500h6q3 0 3 2 0-2 3-2h6v15h-7l-2 2-2-2H1zM10 3.500v15"/></svg></button>
    <button class="ml-3" aria-label="Web版式"><svg class="h-5 w-5" viewBox="0 0 20 20" fill="none" stroke="currentColor" stroke-width="1.400"><circle cx="10" cy="10" r="9"/><ellipse cx="10" cy="10" rx="4.500" ry="9"/><path d="M1.500 7h17M1.500 13h17"/></svg></button>
    <button class="ml-3" aria-label="写作模式"><svg class="h-[22px] w-[22px]" viewBox="0 0 22 22" fill="none" stroke="currentColor" stroke-width="1.400"><path d="M15.500 1.500l4.500 4L9.500 17.500 1.500 20.500 5 13zM5 13l4.500 4.500M17 4L7.500 15M8 21h12"/></svg></button>
    <span class="ml-[12px] h-[26px] w-px bg-[#dfe1e6]"></span>
    <button class="ml-4" aria-label="适合页宽"><svg class="h-[18px] w-[18px]" viewBox="0 0 18 18" fill="none" stroke="currentColor" stroke-width="1.500"><path d="M1 5V1h4M13 1h4v4M17 13v4h-4M5 17H1v-4"/><rect x="5" y="5" width="8" height="8"/></svg></button>
    <button class="ml-[10px] flex w-[52px] items-center justify-between text-[16px]">120%<svg class="h-2 w-2 shrink-0"><use href="#caret"/></svg></button>
    <button class="ml-[14px] h-4 w-3" aria-label="缩小"><svg class="h-4 w-3" viewBox="0 0 12 16"><path d="M0 8h12" stroke="currentColor" stroke-width="3"/></svg></button>
    <input type="range" min="0" max="100" value="50" aria-label="缩放" class="ml-[15px] h-4 w-[178px] appearance-none bg-[linear-gradient(90deg,#3b435a_50%,#d3d6dd_50%)] bg-[length:100%_1px] bg-center bg-no-repeat [&::-webkit-slider-thumb]:h-4 [&::-webkit-slider-thumb]:w-4 [&::-webkit-slider-thumb]:appearance-none [&::-webkit-slider-thumb]:rounded-full [&::-webkit-slider-thumb]:border [&::-webkit-slider-thumb]:border-[#555] [&::-webkit-slider-thumb]:bg-[#eee]">
    <button class="ml-2 h-4 w-3" aria-label="放大"><svg class="h-4 w-3" viewBox="0 0 12 16"><path d="M0 8h12M6 2v12" stroke="currentColor" stroke-width="3"/></svg></button>
    <button class="mr-[19px] ml-[17px]" aria-label="全屏"><svg class="h-[18px] w-[18px]" viewBox="0 0 18 18" fill="none" stroke="currentColor" stroke-width="1.800"><path d="M1 6V1h5M12 1h5v5M17 12v5h-5M6 17H1v-5M1 1l6 6M17 1l-6 6M17 17l-6-6M1 17l6-6"/></svg></button>
  </div>
  <span class="pointer-events-none absolute top-[3px] right-3 text-[20px] leading-6 font-light text-[#8a8c90]">CSDN @屹只</span>
</footer>
</body>
</html>
